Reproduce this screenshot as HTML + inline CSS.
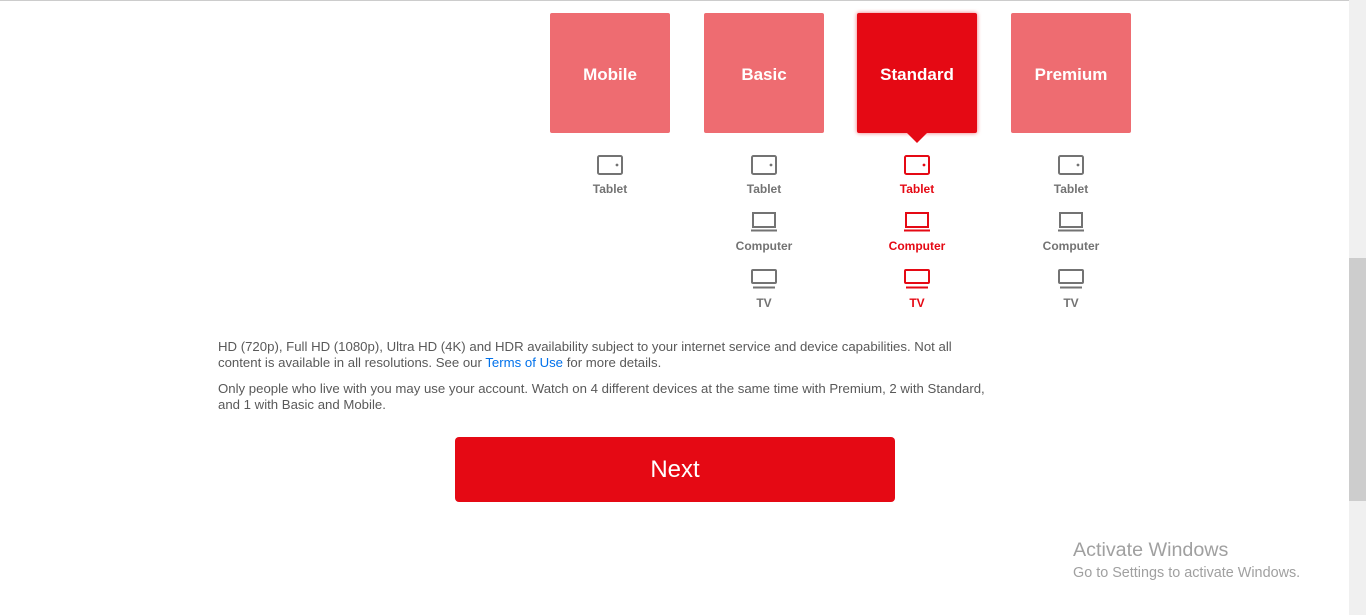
<!DOCTYPE html>
<html><head><style>
body{margin:0;width:1366px;height:615px;overflow:hidden;background:#fff;font-family:"Liberation Sans",sans-serif;position:relative}
.top{position:absolute;left:0;top:0;width:1349px;height:1px;background:#ccc}
.sb{position:absolute;left:1349px;top:0;width:17px;height:615px;background:#f0f0f0}
.th{position:absolute;left:1349px;top:258px;width:17px;height:243px;background:#cdcdcd}
.box{position:absolute;top:13px;width:120px;height:120px;background:#ee6c71;color:#fff;font-weight:bold;font-size:17px;display:flex;align-items:center;justify-content:center;border-radius:2px;box-sizing:border-box;padding-top:3px}
.sel{background:#e50914;box-shadow:0 0 4px rgba(229,9,20,.6)}
.arr{position:absolute;left:907px;top:133px;width:0;height:0;border-left:10px solid transparent;border-right:10px solid transparent;border-top:10px solid #e50914}
.it{position:absolute;width:120px;text-align:center;font-size:12px;font-weight:bold;color:#737373}
.it svg{display:block;margin:0 auto 7px}
.r{color:#e50914}
p{position:absolute;left:218px;margin:0;font-size:13.2px;line-height:16px;color:#595959;white-space:nowrap}
a{color:#0071eb;text-decoration:none}
.btn{position:absolute;left:455px;top:437px;width:440px;height:65px;background:#e50914;color:#fff;font-size:24px;display:flex;align-items:center;justify-content:center;border-radius:4px}
.aw{position:absolute;left:1073px;top:539px;color:#a0a0a0;font-size:19.7px}
.aw2{position:absolute;left:1073px;top:565px;color:#a0a0a0;font-size:14.4px}
</style></head><body>
<div class="top"></div>
<div class="box" style="left:550px">Mobile</div>
<div class="box" style="left:704px">Basic</div>
<div class="box sel" style="left:857px">Standard</div>
<div class="box" style="left:1011px">Premium</div>
<div class="arr"></div>
<svg width="0" height="0" style="position:absolute"><defs>
<symbol id="tab" viewBox="0 0 26 20"><rect x="1" y="1" width="24" height="18" rx="1.5" fill="none" stroke="currentColor" stroke-width="2"/><circle cx="20" cy="10" r="1.4" fill="currentColor"/></symbol>
<symbol id="pc" viewBox="0 0 26 20"><rect x="2" y="1" width="22" height="14" fill="none" stroke="currentColor" stroke-width="2"/><path d="M0 18.5H26" stroke="currentColor" stroke-width="2"/></symbol>
<symbol id="tv" viewBox="0 0 26 20"><rect x="1" y="1" width="24" height="13" rx="1" fill="none" stroke="currentColor" stroke-width="2"/><path d="M2 18.5H24" stroke="currentColor" stroke-width="2"/></symbol>
</defs></svg>
<div class="it" style="left:550px;top:155px"><svg width="26" height="20"><use href="#tab"/></svg>Tablet</div>
<div class="it" style="left:704px;top:155px"><svg width="26" height="20"><use href="#tab"/></svg>Tablet</div>
<div class="it r" style="left:857px;top:155px"><svg width="26" height="20"><use href="#tab"/></svg>Tablet</div>
<div class="it" style="left:1011px;top:155px"><svg width="26" height="20"><use href="#tab"/></svg>Tablet</div>
<div class="it" style="left:704px;top:212px"><svg width="26" height="20"><use href="#pc"/></svg>Computer</div>
<div class="it r" style="left:857px;top:212px"><svg width="26" height="20"><use href="#pc"/></svg>Computer</div>
<div class="it" style="left:1011px;top:212px"><svg width="26" height="20"><use href="#pc"/></svg>Computer</div>
<div class="it" style="left:704px;top:269px"><svg width="26" height="20"><use href="#tv"/></svg>TV</div>
<div class="it r" style="left:857px;top:269px"><svg width="26" height="20"><use href="#tv"/></svg>TV</div>
<div class="it" style="left:1011px;top:269px"><svg width="26" height="20"><use href="#tv"/></svg>TV</div>
<p style="top:339px">HD (720p), Full HD (1080p), Ultra HD (4K) and HDR availability subject to your internet service and device capabilities. Not all<br>content is available in all resolutions. See our <a>Terms of Use</a> for more details.</p>
<p style="top:381px">Only people who live with you may use your account. Watch on 4 different devices at the same time with Premium, 2 with Standard,<br>and 1 with Basic and Mobile.</p>
<div class="btn">Next</div>
<div class="aw">Activate Windows</div>
<div class="aw2">Go to Settings to activate Windows.</div>
<div class="sb"></div><div class="th"></div>
</body></html>
